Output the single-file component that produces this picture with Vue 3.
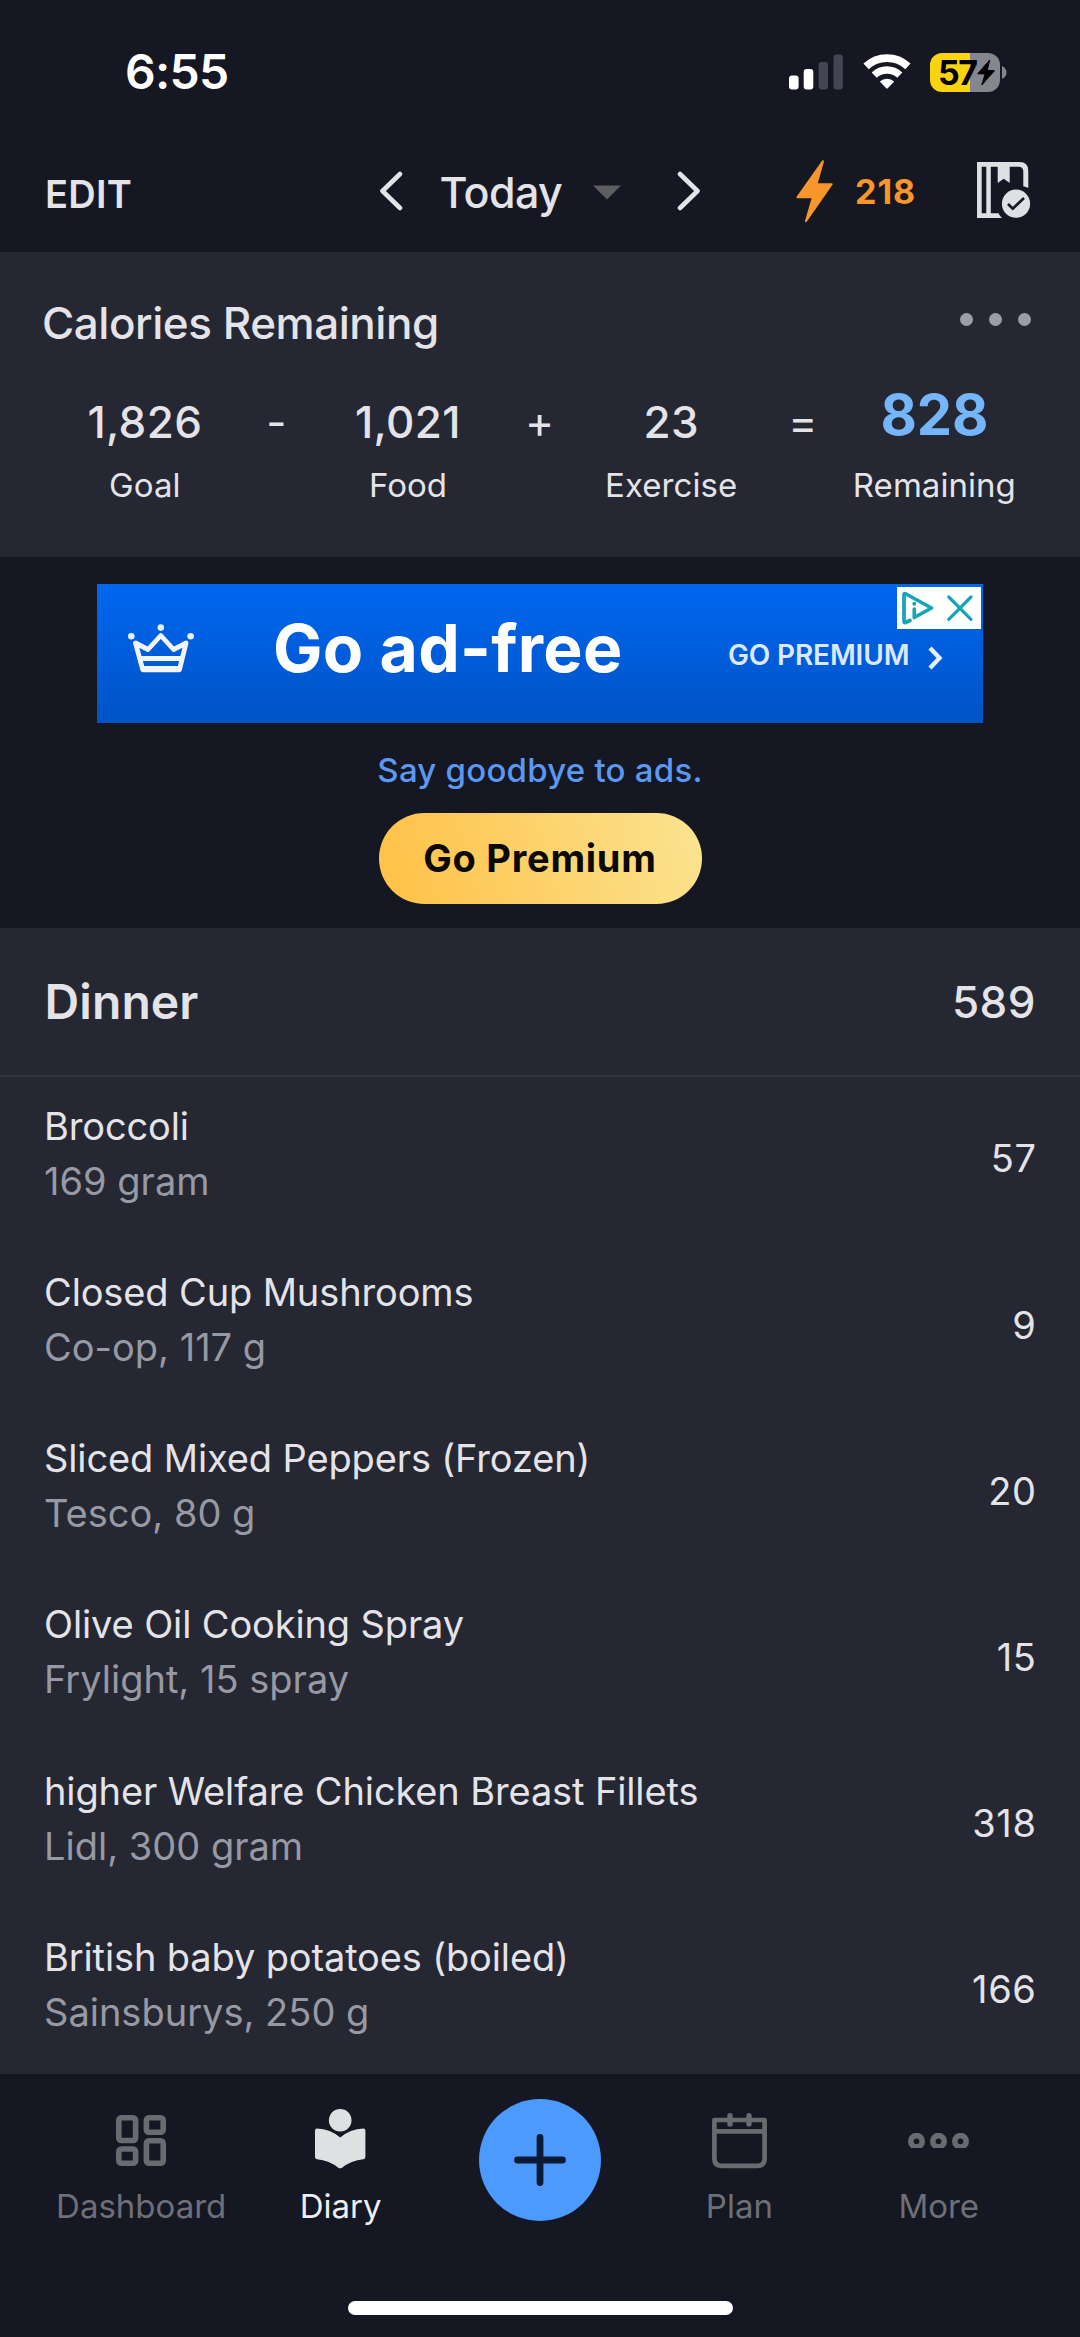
<script setup>
const summary = [
  { value: '1,826', label: 'Goal' },
  { op: '-' },
  { value: '1,021', label: 'Food' },
  { op: '+' },
  { value: '23', label: 'Exercise' },
  { op: '=' },
  { value: '828', label: 'Remaining', highlight: true },
]

const foods = [
  { name: 'Broccoli', detail: '169 gram', calories: 57 },
  { name: 'Closed Cup Mushrooms', detail: 'Co-op, 117 g', calories: 9 },
  { name: 'Sliced Mixed Peppers (Frozen)', detail: 'Tesco, 80 g', calories: 20 },
  { name: 'Olive Oil Cooking Spray', detail: 'Frylight, 15 spray', calories: 15 },
  { name: 'higher Welfare Chicken Breast Fillets', detail: 'Lidl, 300 gram', calories: 318 },
  { name: 'British baby potatoes (boiled)', detail: 'Sainsburys, 250 g', calories: 166 },
]
</script>

<template>
  <div class="screen">
    <header class="status">
      <span class="clock">6:55</span>
      <div class="indicators">
        <svg class="signal" width="54" height="36" viewBox="0 0 54 36">
          <rect x="0" y="21.5" width="9.6" height="14" rx="3" fill="#fff" />
          <rect x="14.7" y="15" width="9.6" height="20.5" rx="3" fill="#fff" />
          <rect x="29.6" y="8" width="9.4" height="27.5" rx="3" fill="#444653" />
          <rect x="44.5" y="0.5" width="9.4" height="35" rx="3" fill="#444653" />
        </svg>
        <svg class="wifi" width="48" height="36" viewBox="0 0 48 36">
          <g fill="none" stroke="#fff">
            <path d="M3.1 12.3 A30.7 30.7 0 0 1 44.9 12.3" stroke-width="7.8" />
            <path d="M11.2 21.1 A18.7 18.7 0 0 1 36.8 21.1" stroke-width="7.4" />
          </g>
          <path d="M16.8 27.6 A10.6 10.6 0 0 1 31.2 27.6 L25 34 Q24 35 23 34 Z" fill="#fff" />
        </svg>
        <div class="battery">
          <span class="level">57</span>
          <svg width="18" height="27" viewBox="46.5 7 18 27">
            <path d="M59.2 8 L47.2 21.7 L54.6 22 L51.3 33 L64 18.7 L56.8 18.3 Z" fill="#000" stroke="#000" stroke-linejoin="round" />
          </svg>
        </div>
        <svg class="nub" width="5" height="13" viewBox="0 0 5 13"><path d="M0 0 Q4.5 2.5 4.5 6.5 T0 13 Z" fill="#85868e" /></svg>
      </div>
    </header>

    <nav class="topbar">
      <span class="edit">EDIT</span>
      <svg class="prev" width="24" height="40" viewBox="0 0 24 40"><path d="M21 3 L3.5 20 L21 37" class="chev" /></svg>
      <span class="day">Today</span>
      <svg class="caret" width="28" height="15" viewBox="0 0 28 15"><path d="M0 0.5 H28 L14 14.5 Z" fill="#5e5e60" /></svg>
      <svg class="next" width="24" height="40" viewBox="0 0 24 40"><path d="M3 3 L20.5 20 L3 37" class="chev" /></svg>
      <svg class="bolt" width="37" height="63" viewBox="0 0 37 63">
        <path d="M27 1.2 L20.5 24.3 H35.7 L9.9 61.3 L16.9 37.3 H1.4 Z" fill="#f6962b" stroke="#f6962b" stroke-width="2" stroke-linejoin="round" />
      </svg>
      <span class="streak">218</span>
      <svg class="book" width="54" height="56" viewBox="0 0 54 56">
        <g fill="#dfe0e3">
          <path d="M0 0 H42.5 Q51.3 0 51.3 8.8 V26 Q49 24.6 46.3 24.2 V9.5 Q46.3 4.7 41.5 4.7 H32.7 V21 L26.7 16.7 L20.7 21 V4.7 H13.8 V51.3 H21.5 Q22.8 54.2 25 56 H0 Z M4.7 4.7 V51.3 H9.3 V4.7 Z" fill-rule="evenodd" />
          <circle cx="39" cy="41.7" r="14.1" />
        </g>
        <path d="M31 42 L35.8 46.7 L47 36" fill="none" stroke="#161824" stroke-width="2.7" />
      </svg>
    </nav>

    <section class="calories">
      <div class="cal-head">
        <h2>Calories Remaining</h2>
        <div class="dots"><i /><i /><i /></div>
      </div>
      <div class="equation">
        <div v-for="(s, i) in summary" :key="i" class="term">
          <span v-if="s.op" class="op">{{ s.op }}</span>
          <template v-else>
            <span class="value" :class="{ highlight: s.highlight }">{{ s.value }}</span>
            <span class="label">{{ s.label }}</span>
          </template>
        </div>
      </div>
    </section>

    <section class="promo">
      <div class="banner">
        <svg class="crown" width="66" height="50" viewBox="0 0 66 50">
          <path d="M7.5 19 L20 25.5 L32.8 11.5 L45.6 25.5 L58.1 19 L51.4 45.8 H14.8 Z M11.2 34.5 H54.5" fill="none" stroke="#f2f7ff" stroke-width="4.8" stroke-linejoin="round" />
          <path d="M15 43 H51" stroke="#f2f7ff" stroke-width="2" />
          <g fill="#e4eeff"><circle cx="32.8" cy="3.6" r="3.3" /><circle cx="3.3" cy="12.3" r="3.3" /><circle cx="62.6" cy="12.3" r="3.3" /></g>
        </svg>
        <span class="headline">Go ad-free</span>
        <span class="cta">GO PREMIUM</span>
        <svg class="cta-arrow" width="16" height="26" viewBox="0 0 16 26"><path d="M3 3 L12.5 13 L3 23" fill="none" stroke="#e6efff" stroke-width="4.4" /></svg>
        <svg class="adchoices" width="84" height="42" viewBox="0 0 84 42">
          <rect width="84" height="42" fill="#fff" />
          <g fill="none" stroke="#17a4b8" stroke-linecap="round" stroke-linejoin="round">
            <path d="M13 33.5 L8.5 35.5 Q7 36 7 34 V8 Q7 6 9 7 L34.5 21 L17.3 30.5 V22" stroke-width="3.7" />
            <path d="M51.8 10 L74 32.3 M74 10 L51.8 32.3" stroke-width="3.2" />
          </g>
          <circle cx="17.3" cy="16.8" r="2" fill="#17a4b8" />
        </svg>
      </div>
      <a class="goodbye">Say goodbye to ads.</a>
      <button class="premium">Go Premium</button>
    </section>

    <section class="meal">
      <div class="meal-head">
        <h3>Dinner</h3>
        <span>589</span>
      </div>
      <ul>
        <li v-for="f in foods" :key="f.name">
          <div>
            <p class="name">{{ f.name }}</p>
            <p class="detail">{{ f.detail }}</p>
          </div>
          <span class="kcal">{{ f.calories }}</span>
        </li>
      </ul>
    </section>

    <footer class="tabs">
      <div class="tab">
        <div class="icon">
          <svg width="50" height="51" viewBox="0 0 50 51" fill="none" stroke="#6a6b70" stroke-width="5.6">
            <rect x="2.8" y="2.8" width="16.8" height="22.7" rx="2.5" />
            <rect x="30.4" y="2.8" width="16.8" height="14.5" rx="2.5" />
            <rect x="2.8" y="34" width="16.8" height="14.2" rx="2.5" />
            <rect x="30.4" y="25.8" width="16.8" height="22.4" rx="2.5" />
          </svg>
        </div>
        <span>Dashboard</span>
      </div>
      <div class="tab active">
        <div class="icon diary">
          <svg width="51" height="60" viewBox="0 0 51 60" fill="#dfe0e1">
            <circle cx="25.2" cy="11.3" r="11.3" />
            <path d="M2 19.6 Q15.5 20.3 25.2 28.6 Q35 20.3 48.4 19.6 Q50.4 19.6 50.4 21.6 V48 Q50.4 50 48.4 50.2 Q36 51.5 27 58.7 Q25.2 60 23.4 58.7 Q14.4 51.5 2 50.2 Q0 50 0 48 V21.6 Q0 19.6 2 19.6 Z" />
          </svg>
        </div>
        <span>Diary</span>
      </div>
      <div class="tab">
        <div class="add">
          <svg width="52" height="52" viewBox="0 0 52 52"><path d="M26 3.5 V48.5 M3.5 26 H48.5" stroke="#0d1a36" stroke-width="6.8" stroke-linecap="round" /></svg>
        </div>
      </div>
      <div class="tab">
        <div class="icon">
          <svg width="55" height="56" viewBox="0 0 55 56" fill="none" stroke="#6a6b70" stroke-width="4.7">
            <path d="M2.4 7 H52.6 V45.5 Q52.6 52.8 45.3 52.8 H9.7 Q2.4 52.8 2.4 45.5 Z M2.4 18.3 H52.6" stroke-linejoin="round" />
            <path d="M18 2.7 V11 M37 2.7 V11" stroke-linecap="round" stroke-width="5.4" />
          </svg>
        </div>
        <span>Plan</span>
      </div>
      <div class="tab">
        <div class="icon">
          <svg width="61" height="15" viewBox="0 0 61 15" fill="none" stroke="#6a6b70" stroke-width="5.6">
            <circle cx="8.5" cy="8.3" r="5.7" /><circle cx="30.5" cy="8.3" r="5.7" /><circle cx="52.5" cy="8.3" r="5.7" />
          </svg>
        </div>
        <span>More</span>
      </div>
    </footer>
    <div class="home-area"><div class="home" /></div>
  </div>
</template>

<style>
body { background: #151722; }
</style>

<style scoped>
.screen {
  width: 1080px;
  height: 2337px;
  overflow: hidden;
  display: flex;
  flex-direction: column;
  background: #151722;
  color: #e3e3e8;
  font-family: Inter, "Liberation Sans", sans-serif;
  white-space: nowrap;
}
h2, h3, p, ul { margin: 0; padding: 0; list-style: none; }
svg { display: block; flex: none; }

.status {
  height: 130px;
  box-sizing: border-box;
  padding: 14px 73px 0 125px;
  display: flex;
  align-items: center;
  justify-content: space-between;
  flex: none;
}
.clock { font-size: 48px; font-weight: 600; line-height: 60px; letter-spacing: -0.7px; color: #fff; }
.indicators { display: flex; align-items: center; }
.wifi { margin-left: 19.5px; }
.battery {
  width: 70px;
  height: 39px;
  margin-left: 19.5px;
  box-sizing: border-box;
  padding-left: 8px;
  border-radius: 12px;
  display: flex;
  align-items: center;
  background: linear-gradient(90deg, #f8d410 57.5%, #85868e 57.5%);
}
.level { width: 38.5px; font-size: 34px; font-weight: 700; line-height: 39px; letter-spacing: -1.6px; color: #000; }
.nub { margin-left: 2px; }

.topbar { height: 122px; flex: none; display: flex; align-items: center; padding-left: 45px; }
.edit { width: 334px; padding-top: 6px; font-size: 38px; font-weight: 600; letter-spacing: 0.3px; line-height: 50px; }
.chev { fill: none; stroke: #e3e3e8; stroke-width: 4.6; stroke-linecap: round; stroke-linejoin: round; }
.day { width: 123px; margin-left: 36.5px; padding-top: 1px; font-size: 43px; font-weight: 470; letter-spacing: -0.6px; line-height: 50px; }
.caret { margin-left: 30.5px; margin-top: 2px; }
.next { margin-left: 55.5px; }
.bolt { margin-left: 95px; }
.streak { width: 60px; margin-left: 22.5px; padding-top: 1px; font-size: 34px; font-weight: 700; letter-spacing: 1px; line-height: 40px; color: #f6962b; }
.book { margin-left: 62px; margin-top: -2px; }

.calories { height: 305px; flex: none; box-sizing: border-box; padding-top: 41px; background: #252732; }
.cal-head { display: flex; justify-content: space-between; padding: 0 49px 0 42px; height: 60px; }
h2 { font-size: 44px; font-weight: 450; line-height: 60px; letter-spacing: -0.46px; }
.dots { display: flex; gap: 16px; padding-top: 20px; }
.dots i { width: 13px; height: 13px; border-radius: 50%; background: #9d9ea5; }
.equation { display: grid; grid-template-columns: repeat(7, 131.6px); padding: 39px 0 0 79px; }
.term { display: flex; flex-direction: column; align-items: center; }
.value { font-size: 44px; font-weight: 450; line-height: 60px; letter-spacing: 0.35px; }
.highlight { font-size: 56px; font-weight: 700; line-height: 46px; margin-bottom: 14px; letter-spacing: -0.2px; color: #74b6f9; }
.label { margin-top: 12.5px; font-size: 33px; line-height: 40px; letter-spacing: 0.05px; }
.op { font-size: 44px; line-height: 60px; }

.promo { height: 370.5px; flex: none; display: flex; flex-direction: column; align-items: center; box-sizing: border-box; padding-top: 27px; }
.banner {
  position: relative;
  width: 886px;
  height: 138.5px;
  flex: none;
  display: flex;
  align-items: center;
  box-sizing: border-box;
  padding-left: 30.5px;
  background: linear-gradient(180deg, #0067f0, #0053c5);
}
.crown { margin-top: -8px; }
.headline { width: 350px; margin-left: 79.5px; margin-top: -10px; font-size: 66px; font-weight: 700; letter-spacing: 0.3px; line-height: 80px; color: #fff; }
.cta { width: 182px; margin-left: 105px; margin-top: 3px; font-size: 28px; font-weight: 600; letter-spacing: -0.15px; line-height: 40px; color: #dbe8ff; }
.cta-arrow { margin-left: 17px; margin-top: 9px; }
.adchoices { position: absolute; top: 3px; right: 2.5px; }
.goodbye { margin-top: 27.5px; font-size: 33px; font-weight: 500; line-height: 40px; letter-spacing: 0.23px; color: #5b98f2; }
.premium {
  margin-top: 23px;
  width: 323px;
  height: 91px;
  border: 0;
  border-radius: 46px;
  padding: 0;
  background: linear-gradient(75deg, #ffc34b 8%, #fbe28d 95%);
  font: 700 38px/91px Inter, "Liberation Sans", sans-serif;
  letter-spacing: 0.75px;
  color: #0b0906;
}

.meal { height: 1146px; flex: none; background: #252732; }
.meal-head {
  height: 149.5px;
  box-sizing: border-box;
  padding: 0 44px 0 44.5px;
  display: flex;
  align-items: center;
  justify-content: space-between;
  border-bottom: 2px solid #30323d;
}
h3 { font-size: 48px; font-weight: 600; letter-spacing: 0.1px; }
.meal-head span { padding-top: 2px; font-size: 44px; font-weight: 450; letter-spacing: 0.5px; }
li { height: 166.2px; box-sizing: border-box; padding: 21.8px 43.5px 0 44px; display: flex; justify-content: space-between; font-size: 38px; line-height: 55px; }
.name { letter-spacing: -0.13px; }
.detail { color: #9799a4; letter-spacing: 0; }
.kcal { margin-top: 32.7px; letter-spacing: 0.6px; }

.tabs { height: 180px; flex: none; display: flex; padding: 0 41.5px; }
.tab { width: 199.4px; display: flex; flex-direction: column; align-items: center; font-size: 33px; line-height: 40px; color: #6e6f79; }
.active { color: #eeeef5; }
.icon { height: 70px; margin: 32px 0 10px; display: flex; align-items: center; }
.diary svg { margin-bottom: 3px; }
.add { width: 122px; height: 122px; margin-top: 25.5px; border-radius: 50%; background: #4d9aff; display: flex; align-items: center; justify-content: center; }
.home-area { flex: 1; display: flex; justify-content: center; align-items: flex-end; padding-bottom: 22px; }
.home { width: 385px; height: 14px; border-radius: 7px; background: #fff; }
</style>
